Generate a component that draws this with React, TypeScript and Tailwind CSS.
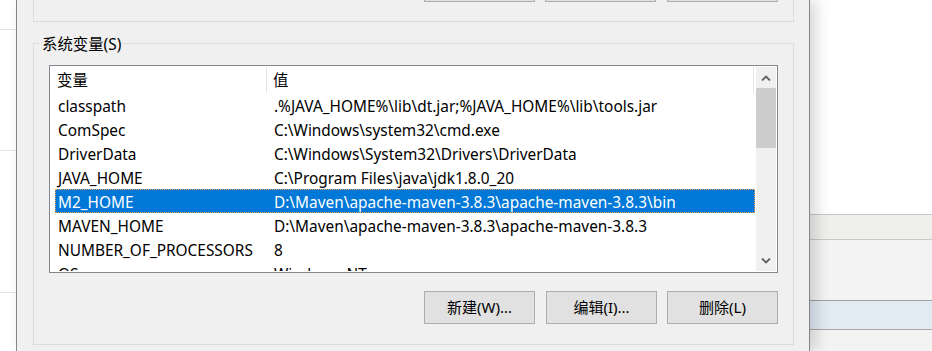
import React from 'react'

const font = { fontFamily: '"Noto Sans", "Noto Sans CJK SC", sans-serif' }

const rows: [string, string][] = [
  ['classpath', '.%JAVA_HOME%\\lib\\dt.jar;%JAVA_HOME%\\lib\\tools.jar'],
  ['ComSpec', 'C:\\Windows\\system32\\cmd.exe'],
  ['DriverData', 'C:\\Windows\\System32\\Drivers\\DriverData'],
  ['JAVA_HOME', 'C:\\Program Files\\java\\jdk1.8.0_20'],
  ['M2_HOME', 'D:\\Maven\\apache-maven-3.8.3\\apache-maven-3.8.3\\bin'],
  ['MAVEN_HOME', 'D:\\Maven\\apache-maven-3.8.3\\apache-maven-3.8.3'],
  ['NUMBER_OF_PROCESSORS', '8'],
  ['OS', 'Windows_NT'],
]

const Chevron = ({ up }: { up?: boolean }) => (
  <svg width="10" height="6" viewBox="0 0 10 6">
    <polyline
      points={up ? '1,5.5 5,1.5 9,5.5' : '1,0.5 5,4.5 9,0.5'}
      fill="none"
      stroke="#606060"
      strokeWidth="1.8"
    />
  </svg>
)

const Btn = ({ label, className = '' }: { label?: string; className?: string }) => (
  <button
    className={`h-[33px] w-[111px] shrink-0 border border-[#adadad] bg-[#e1e1e1] text-[15px] text-black ${className}`}
  >
    {label}
  </button>
)

export default function App() {
  return (
    <div className="flex h-[351px] w-[932px] overflow-hidden bg-white text-[15.4px] text-black" style={font}>
      {/* window behind, left edge */}
      <div className="flex w-[16px] shrink-0 flex-col bg-white">
        <div className="h-[29px]" />
        <div className="h-px bg-[#e3e3e3]" />
        <div className="h-[120px]" />
        <div className="h-px bg-[#e3e3e3]" />
        <div className="h-[141px]" />
        <div className="h-px bg-[#e3e3e3]" />
      </div>

      {/* dialog */}
      <div className="relative z-10 flex w-[794px] shrink-0 flex-col border-x border-[#858585] bg-[#f0f0f0] pl-[16px] pr-[15px] shadow-[6px_0_14px_rgba(0,0,0,0.16)]">
        {/* user variables group (scrolled off the top) */}
        <div className="flex h-[22px] justify-end gap-[11px] border-x border-b border-[#dcdcdc] pr-[15px]">
          <Btn className="-mt-[31px]" />
          <Btn className="-mt-[31px] -ml-px" />
          <Btn className="-mt-[31px]" />
        </div>

        {/* system variables group */}
        <div className="relative mt-[21px] flex h-[302px] flex-col border border-[#dcdcdc] pl-[15px] pr-[15px] pt-[21px] pb-[20px]">
          <span className="absolute -top-[9px] left-[6px] bg-[#f0f0f0] px-[2px] leading-[20px]">系统变量(S)</span>

          <div className="flex h-[208px] border border-[#828790] bg-white p-px">
            <div className="flex flex-1 flex-col overflow-hidden">
              <div className="flex h-[26px] shrink-0 items-start">
                <div className="h-full w-[216px] border-r border-[#e5e5e5] pl-[6px] pt-[2px] leading-[24px]">变量</div>
                <div className="h-full w-[487px] border-r border-[#e5e5e5] pl-[6px] pt-[2px] leading-[24px]">值</div>
              </div>
              {rows.map(([name, value]) => {
                const sel = name === 'M2_HOME'
                return (
                  <div
                    key={name}
                    className={`ml-[4px] flex h-[24px] w-[700px] shrink-0 items-start whitespace-nowrap leading-[22px] ${
                      sel ? 'border border-dotted border-[#f5a34f] bg-[#0078d7] text-white' : ''
                    }`}
                  >
                    <div className={sel ? 'w-[211px] pl-[2px] pt-[2px]' : 'w-[212px] pl-[3px] pt-[3px]'}>{name}</div>
                    <div className={sel ? 'pl-[7px] pt-[2px]' : 'pl-[7px] pt-[3px]'}>{value}</div>
                  </div>
                )
              })}
            </div>

            <div className="flex w-[20px] shrink-0 flex-col bg-[#f0f0f0]">
              <div className="flex h-[21px] items-center justify-center">
                <Chevron up />
              </div>
              <div className="h-[60px] bg-[#cdcdcd]" />
              <div className="flex-1" />
              <div className="flex h-[21px] items-center justify-center">
                <Chevron />
              </div>
            </div>
          </div>

          <div className="mt-[18px] flex justify-end">
            <Btn label="新建(W)..." />
            <Btn label="编辑(I)..." className="ml-[11px]" />
            <Btn label="删除(L)" className="ml-[10px]" />
          </div>
        </div>
      </div>

      {/* window behind, right side */}
      <div className="flex flex-1 flex-col">
        <div className="h-[214px] bg-white" />
        <div className="h-[26px] border-y border-[#c8c8c8] bg-[#efefed]" />
        <div className="h-[60px] bg-[#f3f3f3]" />
        <div className="h-[30px] border-t border-b border-t-[#a0a0a0] border-b-[#a8a8a8] border-b-dashed bg-[#e2eaf4]" />
        <div className="flex-1 bg-[#f3f3f3]" />
      </div>
    </div>
  )
}
